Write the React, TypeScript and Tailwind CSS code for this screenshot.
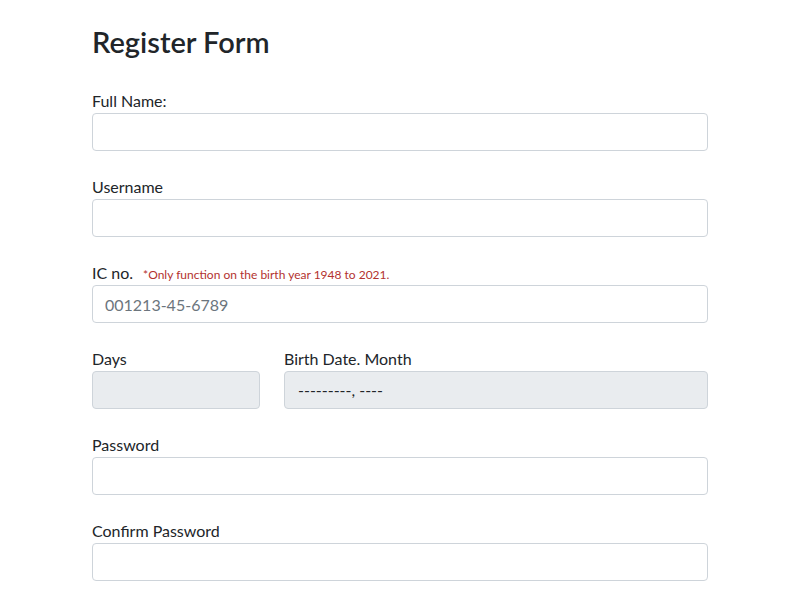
export default function App() {
  const font = { fontFamily: '"Lato", "Liberation Sans", sans-serif' };

  const inputClass =
    "block h-[38px] w-full rounded border border-[#ced4da] bg-white px-3 text-base text-[#212529] placeholder:text-[#6c757d] outline-none";

  return (
    <div className="min-h-screen bg-white text-[#212529]" style={font}>
      <div className="mx-auto w-[616px] pt-[23px]">
        <h2 className="mb-[28px] text-[29px] font-semibold leading-[38px]">Register Form</h2>
        <form className="flex flex-col gap-6">
          <div>
            <label htmlFor="fullName" className="block text-base leading-6">
              Full Name:
            </label>
            <input id="fullName" type="text" className={inputClass} />
          </div>

          <div>
            <label htmlFor="username" className="block text-base leading-6">
              Username
            </label>
            <input id="username" type="text" className={inputClass} />
          </div>

          <div>
            <div className="flex h-6 items-baseline gap-[10px] overflow-hidden leading-6">
              <label htmlFor="ic" className="text-base leading-6">
                IC no.
              </label>
              <small className="text-[12px] leading-4 text-[#b3322f]">
                *Only function on the birth year 1948 to 2021.
              </small>
            </div>
            <input id="ic" type="text" placeholder="001213-45-6789" className={inputClass} />
          </div>

          <div className="flex gap-6">
            <div className="w-[168px]">
              <label htmlFor="days" className="block text-base leading-6">
                Days
              </label>
              <input
                id="days"
                type="text"
                disabled
                className="block h-[38px] w-full rounded border border-[#ced4da] bg-[#e9ecef] px-3"
              />
            </div>
            <div className="flex-1">
              <label htmlFor="month" className="block text-base leading-6">
                Birth Date. Month
              </label>
              <div
                id="month"
                className="flex h-[38px] w-full items-center rounded border border-[#ced4da] bg-[#e9ecef] px-[13px] text-base text-[#212529]"
              >
                ---------, ----
              </div>
            </div>
          </div>

          <div>
            <label htmlFor="password" className="block text-base leading-6">
              Password
            </label>
            <input id="password" type="password" className={inputClass} />
          </div>

          <div>
            <label htmlFor="confirm" className="block text-base leading-6">
              Confirm Password
            </label>
            <input id="confirm" type="password" className={inputClass} />
          </div>
        </form>
      </div>
    </div>
  );
}
